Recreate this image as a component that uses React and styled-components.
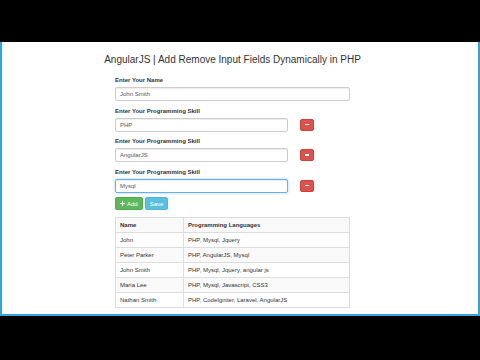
import styled, { createGlobalStyle } from "styled-components";

const GlobalStyle = createGlobalStyle`
  html, body {
    margin: 0;
    padding: 0;
    background: #000;
  }
  body {
    font-family: "Liberation Sans", Arial, sans-serif;
    color: #333;
  }
`;

const Screen = styled.div`
  width: 480px;
  height: 360px;
  padding-top: 42px;
  box-sizing: border-box;
  background: #000;
`;

const Panel = styled.div`
  height: 274px;
  box-sizing: border-box;
  background: #fff;
  border: 2px solid #35a5dd;
  border-top: none;
  overflow: hidden;
`;

const Container = styled.div`
  width: 235px;
  margin-left: 113px;
  padding-top: 12px;
`;

const Title = styled.h3`
  display: flex;
  justify-content: center;
  white-space: nowrap;
  margin: 0 0 9px;
  font-size: 10px;
  line-height: 12px;
  font-weight: normal;
  color: #333;
`;

const FormGroup = styled.div`
  margin-bottom: 4.5px;
`;

const Label = styled.label`
  display: block;
  padding-top: 1px;
  margin-bottom: 3px;
  font-size: 6px;
  line-height: 8px;
  font-weight: bold;
  color: #333;
`;

const SkillRow = styled.div`
  display: grid;
  grid-template-columns: 173px 14px;
  column-gap: 12px;
  align-items: start;
`;

const Input = styled.input`
  display: block;
  width: 100%;
  height: 14px;
  box-sizing: border-box;
  margin: 0;
  padding: 0 4px;
  border: 1px solid ${(p) => (p.$focused ? "#66afe9" : "#ccc")};
  border-radius: 2px;
  font-family: "Liberation Sans", Arial, sans-serif;
  font-size: 6px;
  color: #555;
  background: #fff;
  outline: none;
  box-shadow: ${(p) =>
    p.$focused
      ? "inset 0 1px 1px rgba(0,0,0,.075), 0 0 3px rgba(102,175,233,.6)"
      : "inset 0 1px 1px rgba(0,0,0,.075)"};
`;

const RemoveButton = styled.button`
  width: 14px;
  height: 12px;
  margin-top: 1px;
  padding: 0;
  display: flex;
  align-items: center;
  justify-content: center;
  background: #d9534f;
  border: 1px solid #d43f3a;
  border-radius: 2px;
  &::before {
    content: "";
    width: 4px;
    height: 1.5px;
    background: #fff;
  }
`;

const Actions = styled.div`
  display: flex;
  gap: 2px;
  margin-top: 4.5px;
  margin-bottom: 7px;
`;

const ActionButton = styled.button`
  width: ${(p) => p.$w}px;
  height: 13px;
  padding: 0;
  display: flex;
  align-items: center;
  justify-content: center;
  gap: 1.5px;
  background: ${(p) => p.$bg};
  border: 1px solid ${(p) => p.$border};
  border-radius: 2px;
  color: #fff;
  font-family: "Liberation Sans", Arial, sans-serif;
  font-size: 6px;
`;

const Table = styled.table`
  width: 235px;
  border-collapse: collapse;
  border: 1px solid #ddd;
  font-size: 6px;
  color: #333;
`;

const Row = styled.tr`
  background: ${(p) => (p.$striped ? "#f9f9f9" : "#fff")};
`;

const Cell = styled.td`
  height: 15px;
  box-sizing: border-box;
  padding: 0 4px;
  border: 1px solid #ddd;
  vertical-align: middle;
  font-weight: ${(p) => (p.$head ? "bold" : "normal")};
  width: ${(p) => (p.$first ? "68px" : "auto")};
`;

const PlusIcon = () => (
  <svg width="5" height="5" viewBox="0 0 10 10">
    <path d="M4 0h2v4h4v2H6v4H4V6H0V4h4z" fill="#fff" />
  </svg>
);

const skills = ["PHP", "AngularJS", "Mysql"];

const people = [
  ["John", "PHP, Mysql, Jquery"],
  ["Peter Parker", "PHP, AngularJS, Mysql"],
  ["John Smith", "PHP, Mysql, Jquery, angular js"],
  ["Maria Lee", "PHP, Mysql, Javascript, CSS3"],
  ["Nathan Smith", "PHP, CodeIgniter, Laravel, AngularJS"],
];

export default function App() {
  return (
    <>
      <GlobalStyle />
      <Screen>
        <Panel>
          <Container>
            <Title>AngularJS | Add Remove Input Fields Dynamically in PHP</Title>
            <FormGroup>
              <Label>Enter Your Name</Label>
              <Input readOnly value="John Smith" />
            </FormGroup>
            {skills.map((skill, i) => (
              <FormGroup key={skill}>
                <Label>Enter Your Programming Skill</Label>
                <SkillRow>
                  <Input readOnly value={skill} $focused={i === skills.length - 1} />
                  <RemoveButton aria-label="Remove" />
                </SkillRow>
              </FormGroup>
            ))}
            <Actions>
              <ActionButton $w={28} $bg="#5cb85c" $border="#4cae4c">
                <PlusIcon />
                Add
              </ActionButton>
              <ActionButton $w={23} $bg="#5bc0de" $border="#46b8da">
                Save
              </ActionButton>
            </Actions>
            <Table>
              <tbody>
                <Row $striped>
                  <Cell $head $first>Name</Cell>
                  <Cell $head>Programming Languages</Cell>
                </Row>
                {people.map(([name, langs], i) => (
                  <Row key={name} $striped={i % 2 === 1}>
                    <Cell $first>{name}</Cell>
                    <Cell>{langs}</Cell>
                  </Row>
                ))}
              </tbody>
            </Table>
          </Container>
        </Panel>
      </Screen>
    </>
  );
}
